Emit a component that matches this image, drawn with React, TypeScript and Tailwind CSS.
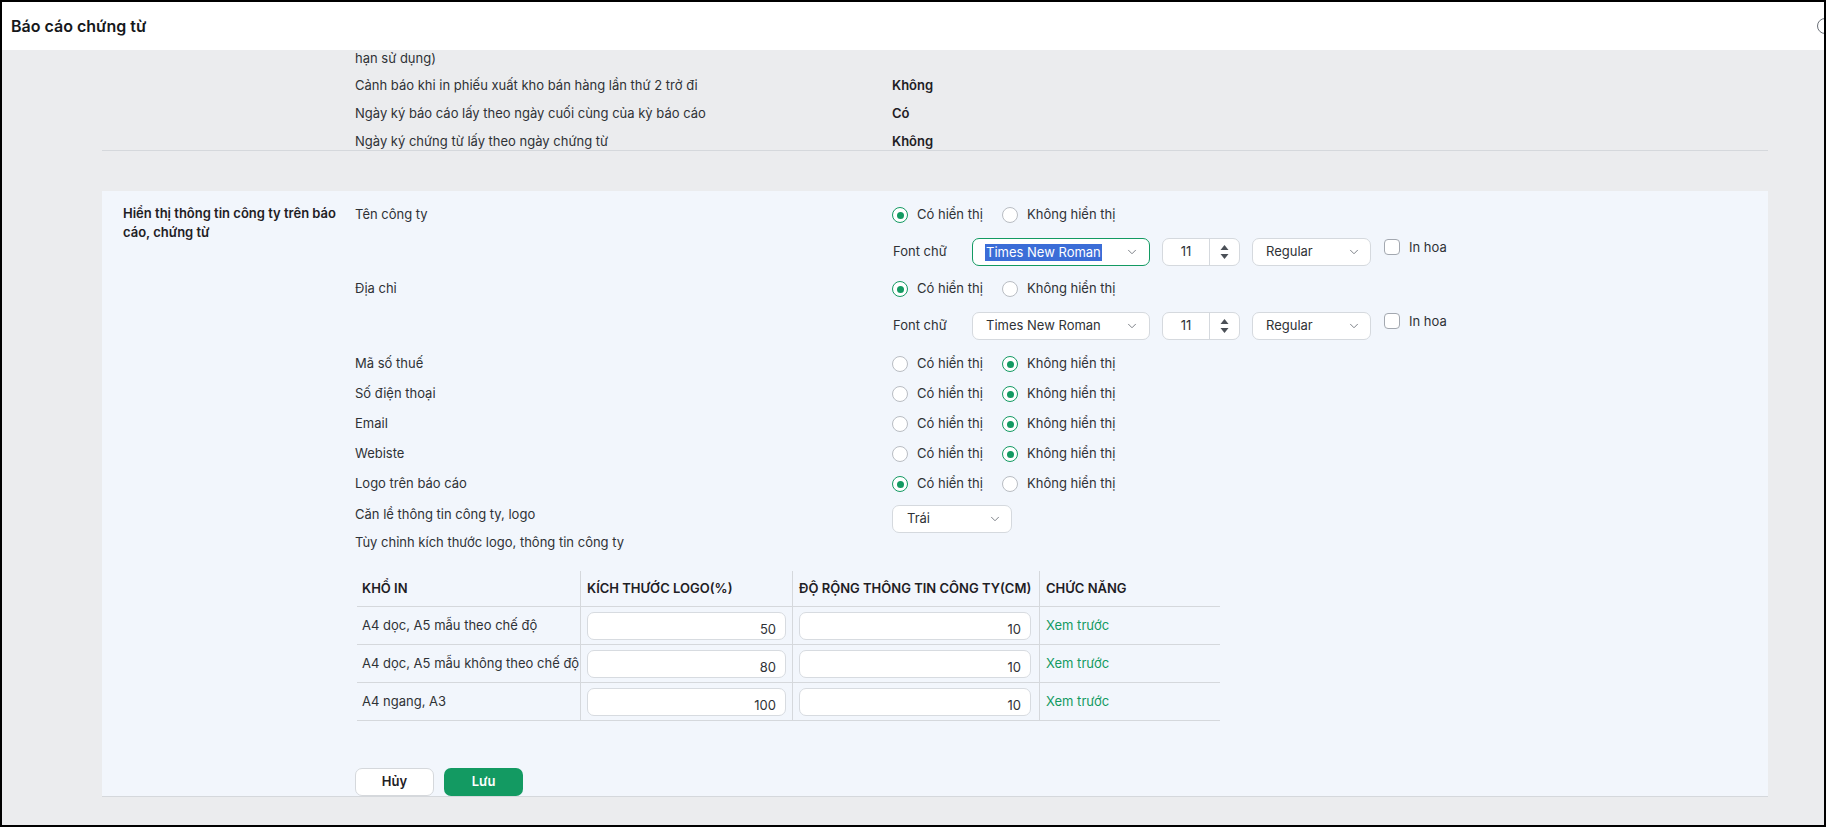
import { ChevronDown } from "lucide-react"

const GREEN = "#139a62"

function Radio({ checked, label, width }: { checked: boolean; label: string; width?: string }) {
  return (
    <div className={`flex items-center gap-[9px] ${width ?? ""}`}>
      {checked ? (
        <span className="w-4 h-4 rounded-full border border-[#139a62] bg-white flex items-center justify-center">
          <span className="w-[7px] h-[7px] rounded-full bg-[#139a62]" />
        </span>
      ) : (
        <span className="w-4 h-4 rounded-full border border-[#b9bdc3] bg-white" />
      )}
      <span>{label}</span>
    </div>
  )
}

function RadioPair({ show }: { show: boolean }) {
  return (
    <div className="flex items-center">
      <Radio checked={show} label="Có hiển thị" width="w-[110px]" />
      <Radio checked={!show} label="Không hiển thị" />
    </div>
  )
}

function Spinner() {
  return (
    <svg width="9" height="16" viewBox="0 0 9 16" fill="#4b5057">
      <path d="M4.5 1 L8.5 6 L0.5 6 Z" />
      <path d="M0.5 10 L8.5 10 L4.5 15 Z" />
    </svg>
  )
}

function FontControls({ focused }: { focused?: boolean }) {
  return (
    <div className="flex items-center">
      <span className="w-[80px] pl-px">Font chữ</span>
      <div
        className={`w-[178px] h-[28px] rounded-[7px] border bg-white flex items-center justify-between pl-[12px] pr-[10px] ${
          focused ? "border-[#139a62]" : "border-[#d5d9de]"
        }`}
      >
        {focused ? (
          <span className="bg-[#3b6dd7] text-white leading-[17px] px-px">Times New Roman</span>
        ) : (
          <span className="px-px">Times New Roman</span>
        )}
        <ChevronDown size={14} strokeWidth={1.5} className="text-[#6b7078]" />
      </div>
      <div className="ml-[12px] w-[78px] h-[28px] rounded-[7px] border border-[#d5d9de] bg-white flex">
        <span className="w-[46px] flex items-center justify-center">11</span>
        <span className="flex-1 border-l border-[#d5d9de] flex items-center justify-center">
          <Spinner />
        </span>
      </div>
      <div className="ml-[12px] w-[119px] h-[28px] rounded-[7px] border border-[#d5d9de] bg-white flex items-center justify-between pl-[13px] pr-[9px]">
        <span>Regular</span>
        <ChevronDown size={14} strokeWidth={1.5} className="text-[#6b7078]" />
      </div>
      <div className="self-start flex items-center">
        <span className="ml-[13px] w-4 h-4 rounded-[4px] border border-[#a3a8b0] bg-white" />
        <span className="ml-[9px] leading-[18px]">In hoa</span>
      </div>
    </div>
  )
}

const topRows = [
  { label: "Cảnh báo khi in phiếu xuất kho bán hàng lần thứ 2 trở đi", value: "Không" },
  { label: "Ngày ký báo cáo lấy theo ngày cuối cùng của kỳ báo cáo", value: "Có" },
  { label: "Ngày ký chứng từ lấy theo ngày chứng từ", value: "Không" },
]

const simpleRows = [
  { label: "Số điện thoại", show: false },
  { label: "Email", show: false },
  { label: "Webiste", show: false },
  { label: "Logo trên báo cáo", show: true },
]

const sizeRows = [
  { name: "A4 dọc, A5 mẫu theo chế độ", logo: "50", width: "10" },
  { name: "A4 dọc, A5 mẫu không theo chế độ", logo: "80", width: "10" },
  { name: "A4 ngang, A3", logo: "100", width: "10" },
]

function NumberBox({ value }: { value: string }) {
  return (
    <div className="h-[28px] rounded-[7px] border border-[#d7dbe0] bg-white text-right pr-[9px] pt-[7px] leading-[18px]">
      {value}
    </div>
  )
}

export default function App() {
  return (
    <div className="w-[1826px] h-[827px] overflow-hidden border-2 border-black bg-[#ebecee] flex flex-col font-['Inter',sans-serif] text-[13px] text-[#2f3236]">
      {/* Header */}
      <div className="h-[48px] shrink-0 bg-white flex items-center pl-[9px] overflow-hidden">
        <span className="text-[16px] font-semibold text-[#16181b]">Báo cáo chứng từ</span>
        <span className="ml-auto -mr-[9px] w-4 h-4 rounded-full border border-[#6b7078]" />
      </div>

      <div className="flex-1 overflow-hidden">
        <div className="ml-[100px] w-[1666px] flex flex-col">
          {/* Previous section tail */}
          <div className="h-[101px] border-b border-[#d5d8dc] pl-[253px] flex flex-col">
            <div className="pt-[2px] leading-[13px]">hạn sử dụng)</div>
            <div className="mt-[7px]">
              {topRows.map((r) => (
                <div key={r.label} className="h-[28px] flex items-center">
                  <span className="w-[537px]">{r.label}</span>
                  <span className="font-semibold text-[#1e2024]">{r.value}</span>
                </div>
              ))}
            </div>
          </div>

          {/* Company info panel */}
          <div className="mt-[40px] h-[606px] bg-[#f2f6fc] border-b border-[#d5d8dc] flex overflow-hidden">
            <div className="w-[253px] shrink-0 pl-[21px] pt-[13px]">
              <div className="w-[222px] font-semibold leading-[19px] text-[#1e2024]">
                Hiển thị thông tin công ty trên báo cáo, chứng từ
              </div>
            </div>

            <div className="flex-1 flex flex-col pt-[9px]">
              <div className="h-[30px] flex items-center">
                <span className="w-[537px]">Tên công ty</span>
                <RadioPair show />
              </div>
              <div className="mt-[8px] h-[28px] flex items-center">
                <span className="w-[537px]" />
                <FontControls focused />
              </div>
              <div className="mt-[8px] h-[30px] flex items-center">
                <span className="w-[537px]">Địa chỉ</span>
                <RadioPair show />
              </div>
              <div className="mt-[8px] h-[28px] flex items-center">
                <span className="w-[537px]" />
                <FontControls />
              </div>
              <div className="mt-[9px] h-[30px] flex items-center">
                <span className="w-[537px]">Mã số thuế</span>
                <RadioPair show={false} />
              </div>
              {simpleRows.map((r) => (
                <div key={r.label} className="h-[30px] flex items-center">
                  <span className="w-[537px]">{r.label}</span>
                  <RadioPair show={r.show} />
                </div>
              ))}
              <div className="h-[34px] flex items-start">
                <span className="w-[537px] pt-[5px] leading-[20px]">Căn lề thông tin công ty, logo</span>
                <div className="mt-[6px] w-[120px] h-[28px] rounded-[7px] border border-[#d5d9de] bg-white flex items-center justify-between pl-[14px] pr-[9px]">
                  <span>Trái</span>
                  <ChevronDown size={14} strokeWidth={1.5} className="text-[#6b7078]" />
                </div>
              </div>
              <div className="-mt-[1px] leading-[20px]">Tùy chỉnh kích thước logo, thông tin công ty</div>

              {/* Size table */}
              <div className="mt-[19px] ml-[2px] w-[863px] grid grid-cols-[224px_212px_247px_180px]">
                {["KHỔ IN", "KÍCH THƯỚC LOGO(%)", "ĐỘ RỘNG THÔNG TIN CÔNG TY(CM)", "CHỨC NĂNG"].map((h, i) => (
                  <div
                    key={h}
                    className={`h-[36px] flex items-center border-b border-[#d5d8dc] font-semibold text-[#1e2024] ${
                      i < 3 ? "border-r" : ""
                    } ${i === 0 ? "pl-[5px]" : "pl-[6px]"}`}
                  >
                    {h}
                  </div>
                ))}
                {sizeRows.map((r) => (
                  <div key={r.name} className="contents">
                    <div className="h-[38px] flex items-center pl-[5px] border-b border-r border-[#d5d8dc]">{r.name}</div>
                    <div className="h-[38px] pt-[5px] px-[6px] border-b border-r border-[#d5d8dc]">
                      <NumberBox value={r.logo} />
                    </div>
                    <div className="h-[38px] pt-[5px] pl-[6px] pr-[8px] border-b border-r border-[#d5d8dc]">
                      <NumberBox value={r.width} />
                    </div>
                    <div className="h-[38px] flex items-center pl-[6px] border-b border-[#d5d8dc]" style={{ color: GREEN }}>
                      Xem trước
                    </div>
                  </div>
                ))}
              </div>

              {/* Actions */}
              <div className="mt-[47px] flex gap-[10px]">
                <button className="w-[79px] h-[28px] rounded-[7px] border border-[#d5d8dc] bg-white font-semibold text-[#1e2024]">
                  Hủy
                </button>
                <button className="w-[79px] h-[28px] rounded-[7px] bg-[#139a62] font-semibold text-white">Lưu</button>
              </div>
            </div>
          </div>
        </div>
      </div>
    </div>
  )
}
